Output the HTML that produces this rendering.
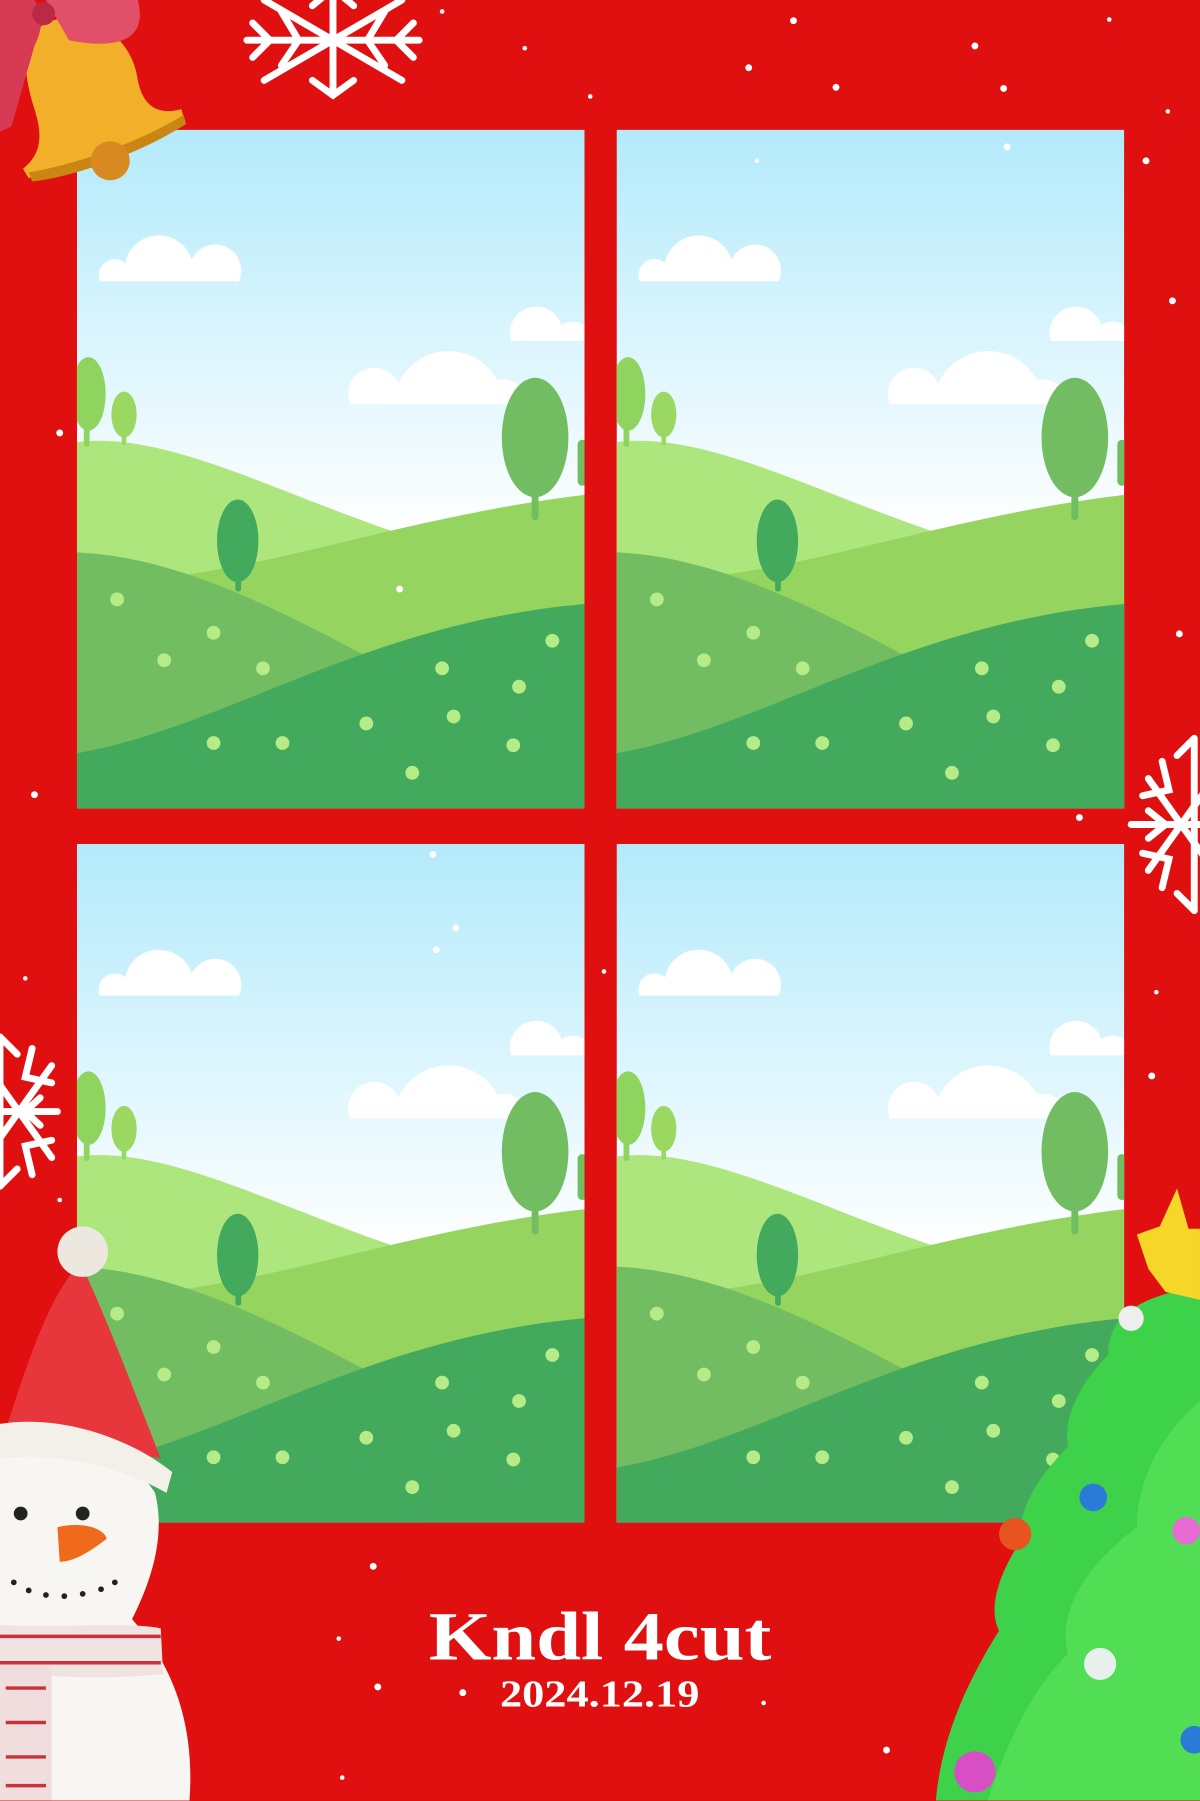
<!DOCTYPE html>
<html><head><meta charset="utf-8"><style>
html,body{margin:0;padding:0;width:1200px;height:1800px;overflow:hidden;background:#e01010}
#w{position:absolute;left:0;top:0;width:1045px;height:1568px;transform:scale(1.148325);transform-origin:0 0;background:#e01010;overflow:hidden}
.p{position:absolute;width:442px;height:591px}
.t{position:absolute;left:0;width:1045px;text-align:center;color:#fff;font-family:"Liberation Serif",serif;font-weight:bold}
.t span{display:inline-block;transform:scaleX(1.17)}
</style></head><body><div id="w">
<svg width="0" height="0" style="position:absolute"><defs>
<linearGradient id="sky" x1="0" y1="0" x2="0" y2="1"><stop offset="0" stop-color="#b3eafb"/><stop offset="0.6" stop-color="#ffffff"/></linearGradient>
<g id="scene">
<rect width="442" height="591" fill="url(#sky)"/>
<g fill="#fff"><path d="M20,132 a14,14 0 0 1 22,-16 a30,30 0 0 1 58,-3 a18,18 0 0 1 41,19 Z"/><path d="M238,239 a22,22 0 0 1 42,-18 a48,48 0 0 1 86,-3 a22,22 0 0 1 27,21 Z"/><path d="M378,184 a22,22 0 0 1 44,-14 a18,18 0 0 1 20,0 L442,184 Z"/></g>
<path d="M0,272 C80,262 180,320 300,358 L300,591 L0,591Z" fill="#aee67e"/>
<path d="M0,392 C130,400 260,340 442,318 L442,591 L0,591Z" fill="#95d55f"/>
<path d="M0,368 C90,372 180,420 270,468 L0,591Z" fill="#72bd62"/>
<path d="M0,543 C130,520 250,430 442,413 L442,591 L0,591Z" fill="#43a95c"/>
<g fill="#72bd62"><ellipse cx="399" cy="268" rx="29" ry="52"/><rect x="396" y="290" width="6" height="50" rx="3"/></g>
<rect x="436" y="270" width="8" height="40" rx="4" fill="#72bd62"/>
<g fill="#43a95c"><ellipse cx="140" cy="358" rx="18" ry="36"/><rect x="138" y="370" width="5" height="32" rx="2"/></g>
<g fill="#8fd45e"><ellipse cx="10" cy="230" rx="15" ry="32"/><rect x="6" y="240" width="5" height="36" rx="2"/></g>
<g fill="#9ad862"><ellipse cx="41" cy="248" rx="11" ry="20"/><rect x="39" y="255" width="4" height="20" rx="2"/></g>
<g fill="#b6ec87"><circle cx="35" cy="409" r="6"/><circle cx="119" cy="438" r="6"/><circle cx="76" cy="462" r="6"/><circle cx="162" cy="469" r="6"/><circle cx="318" cy="469" r="6"/><circle cx="385" cy="485" r="6"/><circle cx="328" cy="511" r="6"/><circle cx="252" cy="517" r="6"/><circle cx="179" cy="534" r="6"/><circle cx="119" cy="534" r="6"/><circle cx="380" cy="536" r="6"/><circle cx="292" cy="560" r="6"/><circle cx="414" cy="445" r="6"/></g>
</g></defs></svg>
<svg class="p" style="left:67px;top:113px" viewBox="0 0 442 591"><use href="#scene"/></svg>
<svg class="p" style="left:537px;top:113px" viewBox="0 0 442 591"><use href="#scene"/></svg>
<svg class="p" style="left:67px;top:735px" viewBox="0 0 442 591"><use href="#scene"/></svg>
<svg class="p" style="left:537px;top:735px" viewBox="0 0 442 591"><use href="#scene"/></svg>

<svg style="position:absolute;left:0;top:0" width="1045" height="1568">
<g fill="#fff">
<circle cx="52" cy="377" r="3"/><circle cx="30" cy="692" r="3"/><circle cx="1021" cy="262" r="3"/><circle cx="1027" cy="552" r="3"/><circle cx="998" cy="140" r="3"/><circle cx="1017" cy="97" r="2"/><circle cx="940" cy="712" r="3"/><circle cx="526" cy="846" r="2"/><circle cx="325" cy="1364" r="3"/><circle cx="295" cy="1427" r="2"/><circle cx="329" cy="1469" r="3"/><circle cx="403" cy="1474" r="3"/><circle cx="772" cy="1524" r="3"/><circle cx="665" cy="1483" r="2"/><circle cx="849" cy="40" r="3"/><circle cx="874" cy="77" r="3"/><circle cx="728" cy="76" r="3"/><circle cx="691" cy="18" r="3"/><circle cx="652" cy="59" r="3"/><circle cx="514" cy="84" r="2"/><circle cx="457" cy="42" r="2"/><circle cx="385" cy="10" r="2"/><circle cx="966" cy="17" r="2"/><circle cx="1007" cy="864" r="2"/><circle cx="1003" cy="937" r="3"/><circle cx="52" cy="1045" r="2"/><circle cx="22" cy="852" r="2"/><circle cx="377" cy="744" r="3"/><circle cx="397" cy="808" r="3"/><circle cx="380" cy="827" r="3"/><circle cx="348" cy="513" r="3"/><circle cx="877" cy="128" r="3"/><circle cx="659" cy="140" r="2"/><circle cx="1005" cy="1527" r="2"/><circle cx="298" cy="1548" r="2"/><circle cx="935" cy="1470" r="3"/><circle cx="925" cy="1417" r="2"/></g>
<g stroke="#fff" stroke-width="6" stroke-linecap="round" fill="none">
<g transform="translate(290,35)"><path d="M0,-45V48M-75,0H75"/><path d="M-18,35L0,48L18,35M-18,-30L0,-45L18,-30"/><path d="M-45,-25L-30,0L-45,22M45,-25L30,0L45,22M-70,-15L-55,0L-70,15M70,-15L55,0L70,15"/><path d="M-60,-35L60,35M-60,35L60,-35"/></g>
<g transform="translate(1040,718)"><path d="M0,-75V75M-55,0H10"/><path d="M-15,-60L0,-75M-15,60L0,75M-40,-12L-25,0L-40,12"/><path d="M-40,-40L10,30M-40,40L10,-30"/><path d="M-28,-55L-22,-30L-45,-25M-28,55L-22,30L-45,25"/></g>
<g transform="translate(0,968)"><path d="M0,-65V65M-10,0H50"/><path d="M35,-12L22,0L35,12M15,-50L0,-65M15,50L0,65"/><path d="M45,-40L-5,30M45,40L-5,-30"/><path d="M28,-55L22,-30L45,-25M28,55L22,30L45,25"/></g>
</g>
<path d="M40,20 C75,5 115,30 120,70 C125,95 140,100 158,95 L160,103 C120,130 60,150 25,155 L20,147 C35,135 38,120 30,95 C22,70 15,35 40,20Z" fill="#f2b02a"/>
<path d="M25,150 C60,145 120,125 160,100 L162,108 C120,135 60,155 28,158Z" fill="#c98612"/>
<circle cx="96" cy="140" r="17" fill="#d88a20"/>
<path d="M0,0 L30,0 C40,15 35,30 30,40 L10,110 L0,115Z" fill="#d63a55"/>
<path d="M40,0 L120,0 C128,30 110,45 60,35Z" fill="#e05068"/>
<circle cx="38" cy="12" r="10" fill="#b82a45"/>
<path d="M0,1568 L0,1250 C40,1240 110,1260 135,1300 C145,1340 130,1380 115,1410 C150,1450 170,1500 165,1568Z" fill="#f8f6f2"/>
<path d="M0,1260 C20,1200 40,1130 70,1100 C90,1140 120,1220 140,1270 C90,1260 40,1250 0,1265Z" fill="#e8373c"/>
<path d="M0,1240 C50,1232 110,1250 150,1282 L145,1300 C100,1275 50,1265 0,1270Z" fill="#f3f0ea"/>
<circle cx="72" cy="1090" r="22" fill="#ede8df"/>
<circle cx="18" cy="1318" r="6" fill="#222"/><circle cx="72" cy="1318" r="6" fill="#222"/>
<path d="M50,1330 C70,1325 90,1330 93,1340 C80,1350 65,1360 52,1360Z" fill="#f06a1c"/>
<g fill="#222"><circle cx="12" cy="1378" r="2.5"/><circle cx="25" cy="1385" r="2.5"/><circle cx="40" cy="1389" r="2.5"/><circle cx="56" cy="1390" r="2.5"/><circle cx="72" cy="1388" r="2.5"/><circle cx="88" cy="1384" r="2.5"/><circle cx="100" cy="1378" r="2.5"/></g>
<path d="M0,1415 C50,1418 110,1412 140,1418 L142,1458 C100,1462 50,1462 0,1455Z" fill="#f2e3e3"/>
<path d="M0,1450 L45,1450 L45,1568 L0,1568Z" fill="#f0dede"/>
<g stroke="#c8323a" stroke-width="3" fill="none"><path d="M0,1425H140M0,1448H140M5,1470H40M5,1500H40M5,1530H40M5,1555H40"/></g>
<path d="M815,1568 C820,1510 845,1460 870,1420 C860,1400 870,1370 890,1340 C885,1315 905,1285 930,1260 C925,1230 945,1200 965,1180 C965,1150 985,1130 1045,1120 L1045,1568Z" fill="#3ed24a"/>
<path d="M860,1568 C880,1510 900,1470 930,1440 C920,1400 950,1360 990,1330 C990,1290 1010,1250 1045,1220 L1045,1568Z" fill="#5ae35a" opacity=".7"/>
<path d="M990,1075 L1010,1068 L1025,1035 L1035,1070 L1045,1070 L1045,1132 L1015,1125 L1000,1105Z" fill="#f5d629"/>
<circle cx="985" cy="1148" r="11" fill="#eee"/>
<circle cx="952" cy="1304" r="12" fill="#2a7ad8"/><circle cx="884" cy="1336" r="14" fill="#e85420"/><circle cx="1033" cy="1333" r="12" fill="#e86ad4"/><circle cx="958" cy="1449" r="14" fill="#e8f0ee"/><circle cx="849" cy="1543" r="18" fill="#d84fc5"/><circle cx="1040" cy="1515" r="12" fill="#2a7ad8"/>
</svg>
<div class="t" style="top:1390px;font-size:60px;line-height:70px"><span>Kndl 4cut</span></div>
<div class="t" style="top:1456px;font-size:33px;line-height:40px"><span>2024.12.19</span></div>
</div></body></html>
